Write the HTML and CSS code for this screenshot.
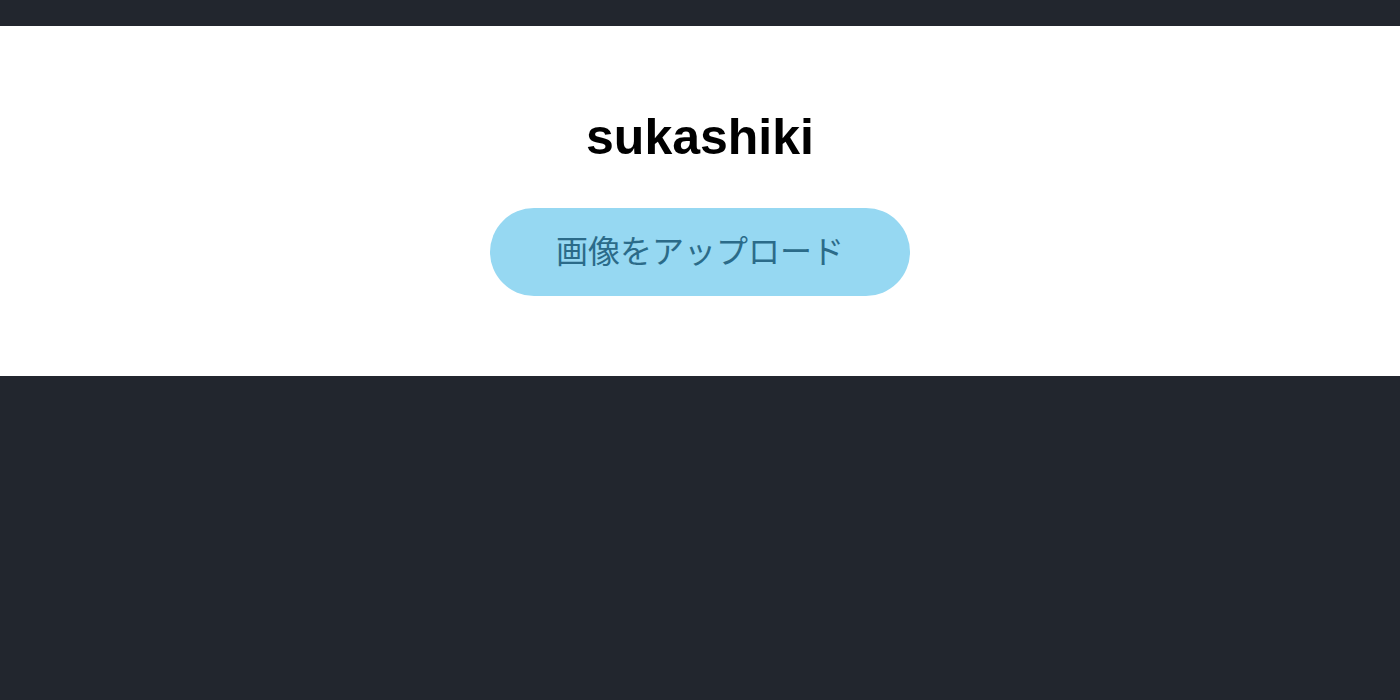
FILE: index.html
```html
<!DOCTYPE html>
<html lang="ja">
<head>
<meta charset="utf-8">
<title>sukashiki</title>
<link rel="stylesheet" href="styles.css">
</head>
<body>
<main class="hero">
<h1 class="title">sukashiki</h1>
<button class="upload" type="button">画像をアップロード</button>
</main>
</body>
</html>
```

FILE: styles.css
```css
body {
  margin: 0;
  padding-top: 26px;
  background: #22262e;
  font-family: "Liberation Sans", "Noto Sans CJK JP", sans-serif;
}

.hero {
  display: flex;
  flex-direction: column;
  align-items: center;
  gap: 40px;
  padding: 80px 20px;
  background: #fff;
}

.title {
  margin: 0;
  color: #000;
  font-size: 50px;
  line-height: 62px;
  font-weight: 700;
}

.upload {
  padding: 20px 66px;
  border: 0;
  border-radius: 44px;
  background: #96d8f2;
  color: #2b6b89;
  font: inherit;
  font-size: 32px;
  line-height: 48px;
}
```
